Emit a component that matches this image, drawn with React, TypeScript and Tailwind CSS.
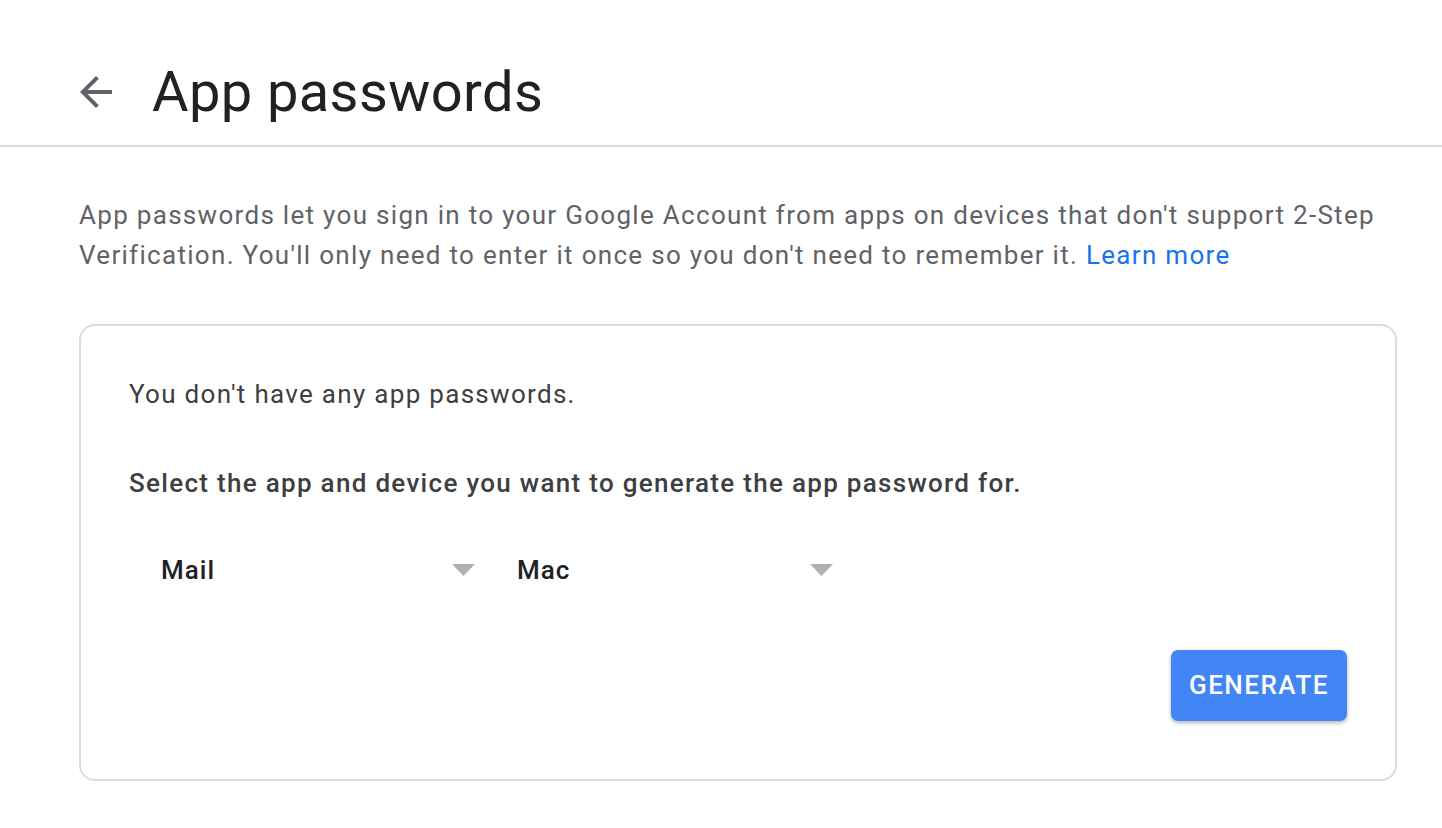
import React from "react";

function Caret() {
  return (
    <svg width="23" height="12" viewBox="0 0 23 12" className="shrink-0">
      <polygon points="0,0 23,0 11.5,12" fill="#b0b0b0" />
    </svg>
  );
}

function Dropdown({ value, className }: { value: string; className: string }) {
  return (
    <div className={`flex items-center justify-between h-[60px] pr-[2px] ${className}`}>
      <span className="text-[26px] font-medium tracking-[1px] text-[#202124]">{value}</span>
      <Caret />
    </div>
  );
}

export default function App() {
  return (
    <main className="min-h-screen bg-white font-['Roboto',sans-serif]">
      <header className="flex items-center h-[147px] pl-[72px] pt-[38px] border-b-2 border-[#dadce0]">
        <button className="w-[48px] h-[48px] flex items-center justify-center text-[#5f6368]">
          <svg width="48" height="48" viewBox="0 0 24 24" fill="currentColor">
            <path d="M20 11H7.83l5.59-5.59L12 4l-8 8 8 8 1.41-1.41L7.83 13H20v-2z" />
          </svg>
        </button>
        <h1 className="ml-[32px] text-[56px] leading-none text-[#202124] tracking-[0.4px]">
          App passwords
        </h1>
      </header>

      <div className="pl-[79px] pr-[40px]">
        <p className="mt-[48px] text-[26px] leading-[40px] text-[#5f6368] tracking-[1.3px]">
          App passwords let you sign in to your Google Account from apps on devices that don't support 2-Step
          Verification. You'll only need to enter it once so you don't need to remember it.{" "}
          <a className="text-[#1a73e8]">Learn more</a>
        </p>

        <section className="mt-[49px] mr-[5px] h-[457px] rounded-[16px] border-2 border-[#dadce0] pl-[48px] pr-[48px] pt-[50px] flex flex-col">
          <p className="text-[26px] leading-[36px] text-[#3c4043] tracking-[1.3px]">You don't have any app passwords.</p>
          <p className="mt-[53px] text-[26px] leading-[36px] font-medium text-[#3c4043] tracking-[1.3px]">
            Select the app and device you want to generate the app password for.
          </p>
          <div className="mt-[39px] flex">
            <Dropdown value="Mail" className="w-[348px] pl-[32px]" />
            <Dropdown value="Mac" className="w-[358px] pl-[40px]" />
          </div>
          <div className="mt-[50px] flex justify-end">
            <button className="w-[176px] h-[71px] rounded-[7px] bg-[#4285f4] text-white text-[26px] font-medium tracking-[1.5px] shadow-[0_2px_4px_rgba(0,0,0,0.3)]">
              GENERATE
            </button>
          </div>
        </section>
      </div>
    </main>
  );
}
